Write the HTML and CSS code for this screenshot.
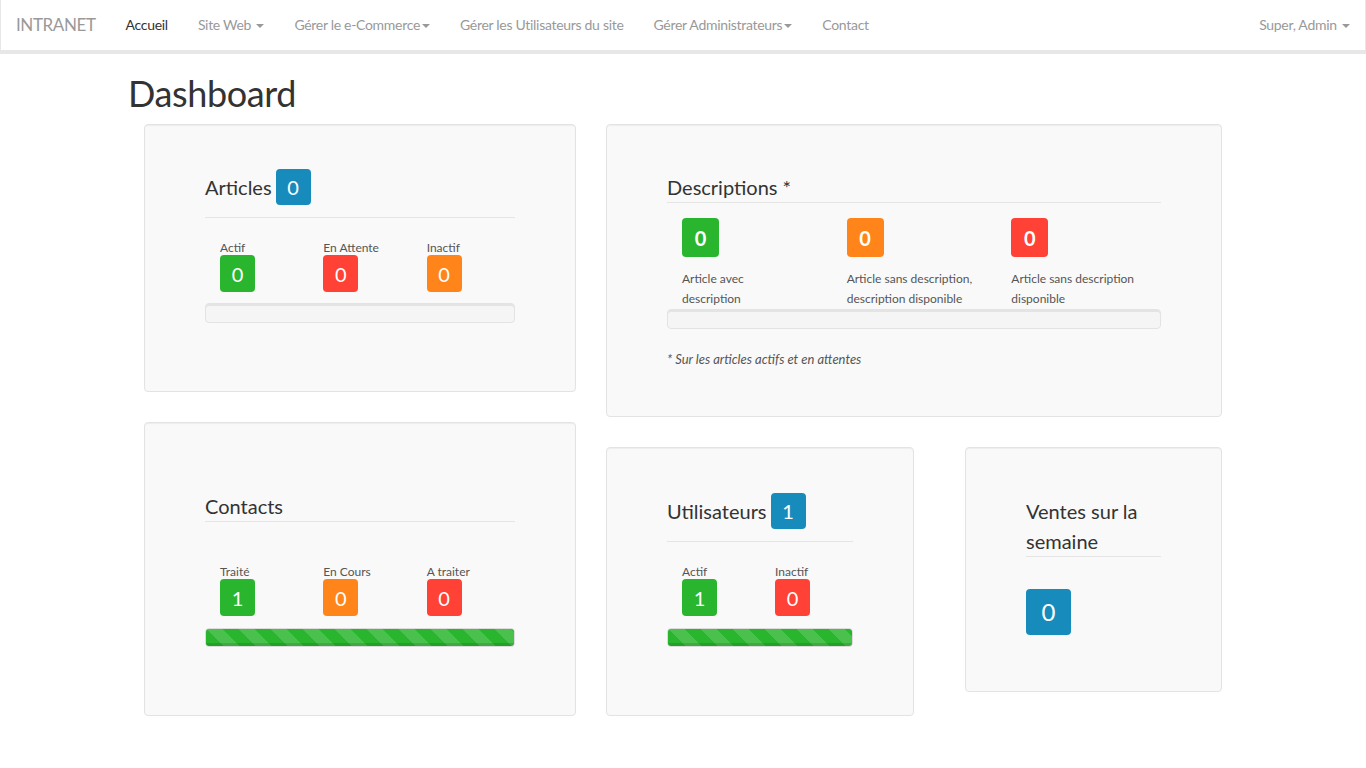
FILE: index.html
```html
<!DOCTYPE html>
<html lang="fr">
<head>
<meta charset="utf-8">
<title>Dashboard - INTRANET</title>
<link rel="stylesheet" href="styles.css">
</head>
<body>
<nav class="navbar">
  <a class="brand" href="#">INTRANET</a>
  <ul class="nav">
    <li class="active"><a href="#">Accueil</a></li>
    <li><a href="#">Site Web <span class="caret"></span></a></li>
    <li><a href="#">Gérer le e-Commerce<span class="caret"></span></a></li>
    <li><a href="#">Gérer les Utilisateurs du site</a></li>
    <li><a href="#">Gérer Administrateurs<span class="caret"></span></a></li>
    <li><a href="#">Contact</a></li>
  </ul>
  <ul class="nav nav-right">
    <li><a href="#">Super, Admin <span class="caret"></span></a></li>
  </ul>
</nav>

<main class="page">
  <h1 class="page-title">Dashboard</h1>
  <div class="dash">
    <div class="col col-left">
      <section class="well well-articles">
        <h3 class="title title-badge">Articles <span class="badge blue">0</span></h3>
        <div class="stats stats-3">
          <div class="stat"><span class="stat-label">Actif</span><span class="box green">0</span></div>
          <div class="stat"><span class="stat-label">En Attente</span><span class="box red">0</span></div>
          <div class="stat"><span class="stat-label">Inactif</span><span class="box orange">0</span></div>
        </div>
        <div class="progress"></div>
      </section>

      <section class="well well-contacts">
        <h3 class="title">Contacts</h3>
        <div class="stats stats-3 stats-low">
          <div class="stat"><span class="stat-label">Traité</span><span class="box green">1</span></div>
          <div class="stat"><span class="stat-label">En Cours</span><span class="box orange">0</span></div>
          <div class="stat"><span class="stat-label">A traiter</span><span class="box red">0</span></div>
        </div>
        <div class="progress progress-fill"><div class="progress-bar" style="width:100%"></div></div>
      </section>
    </div>

    <div class="col col-right">
      <section class="well well-desc">
        <h3 class="title">Descriptions *</h3>
        <div class="stats stats-3 stats-desc">
          <div class="stat"><span class="box box-lg green">0</span><span class="desc-label">Article avec<br>description</span></div>
          <div class="stat"><span class="box box-lg orange">0</span><span class="desc-label">Article sans description,<br>description disponible</span></div>
          <div class="stat"><span class="box box-lg red">0</span><span class="desc-label">Article sans description<br>disponible</span></div>
        </div>
        <div class="progress progress-desc"></div>
        <p class="footnote">* Sur les articles actifs et en attentes</p>
      </section>

      <div class="row-sub">
        <section class="well well-users">
          <h3 class="title title-badge">Utilisateurs <span class="badge blue">1</span></h3>
          <div class="stats stats-2">
            <div class="stat"><span class="stat-label">Actif</span><span class="box green">1</span></div>
            <div class="stat"><span class="stat-label">Inactif</span><span class="box red">0</span></div>
          </div>
          <div class="progress progress-fill"><div class="progress-bar" style="width:100%"></div></div>
        </section>

        <section class="well well-sales">
          <h3 class="title">Ventes sur la semaine</h3>
          <span class="box box-xl blue">0</span>
        </section>
      </div>
    </div>
  </div>
</main>
</body>
</html>
```

FILE: styles.css
```css
html, body {
  margin: 0;
  padding: 0;
}

body {
  font-family: Lato, "Noto Sans", "Liberation Sans", sans-serif;
  font-size: 14px;
  line-height: 20px;
  color: #333;
  background: #fff;
}

a {
  text-decoration: none;
}

/* ---------- Navbar ---------- */
.navbar {
  display: flex;
  align-items: center;
  height: 50px;
  border: 1px solid #e7e7e7;
  border-top: 0;
  border-bottom-width: 4px;
  background: #fff;
}

.brand {
  padding: 0 15px;
  font-size: 17px;
  letter-spacing: -0.4px;
  line-height: 50px;
  color: #999;
}

.nav {
  display: flex;
  list-style: none;
  margin: 0;
  padding: 0;
}

.nav a {
  display: block;
  padding: 15px 15px;
  line-height: 20px;
  color: #999;
  font-size: 14px;
  letter-spacing: -0.3px;
}

.nav .active a {
  color: #333;
}

.nav-right {
  margin-left: auto;
}

.caret {
  display: inline-block;
  width: 0;
  height: 0;
  margin-left: 2px;
  vertical-align: middle;
  border-top: 4px solid #999;
  border-left: 4px solid transparent;
  border-right: 4px solid transparent;
}

/* ---------- Page ---------- */
.page {
  width: 1110px;
  margin: 0 auto;
}

.page-title {
  font-size: 36px;
  font-weight: 400;
  line-height: 40px;
  letter-spacing: -0.4px;
  margin: 19px 0 11px;
  color: #333;
}

.dash {
  display: flex;
  gap: 30px;
  padding-left: 16px;
}

.col {
  display: flex;
  flex-direction: column;
  gap: 30px;
}

.col-left {
  width: 432px;
}

.col-right {
  width: 616px;
}

.row-sub {
  display: flex;
  gap: 51px;
  align-items: flex-start;
}

/* ---------- Wells ---------- */
.well {
  box-sizing: border-box;
  background: #f9f9f9;
  border: 1px solid #e3e3e3;
  border-radius: 4px;
  box-shadow: inset 0 1px 1px rgba(0, 0, 0, 0.05);
  padding: 0 60px;
}

.well-articles { height: 268px; padding-top: 44px; }
.well-contacts { height: 294px; padding-top: 68px; }
.well-desc     { height: 293px; padding-top: 47px; }
.well-users    { width: 308px; height: 269px; padding-top: 45px; }
.well-sales    { width: 257px; height: 245px; padding-top: 48px; }

.title {
  margin: 0;
  font-size: 20px;
  font-weight: 400;
  line-height: 30px;
  color: #333;
  border-bottom: 1px solid #e5e5e5;
}

.title-badge {
  display: flex;
  align-items: center;
  padding-bottom: 12px;
}

.badge {
  display: inline-flex;
  align-items: center;
  justify-content: center;
  width: 35px;
  height: 36px;
  margin-left: 4px;
  border-radius: 4px;
  color: #fff;
  font-size: 20px;
}

/* ---------- Stats ---------- */
.stats {
  display: grid;
  margin-top: 23px;
}

.stats-3 { grid-template-columns: repeat(3, 1fr); }
.stats-2 { grid-template-columns: repeat(2, 1fr); }

.stats-low { margin-top: 43px; }
.stats-desc { margin-top: 15px; }

.stat {
  padding-left: 15px;
}

.stat-label {
  display: block;
  font-size: 12px;
  line-height: 14px;
  color: #555;
}

.box {
  display: flex;
  align-items: center;
  justify-content: center;
  width: 35px;
  height: 37px;
  border-radius: 4px;
  color: #fff;
  font-size: 20px;
}

.box-lg {
  width: 37px;
  height: 39px;
  font-weight: 700;
}

.box-xl {
  width: 45px;
  height: 46px;
  font-size: 24px;
  margin-top: 32px;
}

.desc-label {
  display: block;
  margin-top: 12px;
  font-size: 12px;
  line-height: 20px;
  color: #555;
}

.green  { background: #2ab52e; }
.red    { background: #ff4136; }
.orange { background: #ff851b; }
.blue   { background: #178cbc; }

/* ---------- Progress ---------- */
.progress {
  box-sizing: border-box;
  height: 20px;
  margin-top: 11px;
  background: #f5f5f5;
  border: 1px solid #e3e3e3;
  border-radius: 4px;
  box-shadow: inset 0 2px 0 #e4e4e4;
  overflow: hidden;
}

.progress-fill {
  height: 19px;
  margin-top: 12px;
  border-color: #dcdcdc;
}

.progress-desc {
  margin-top: 0;
}

.progress-bar {
  height: 100%;
  background-color: #2ab52e;
  background-image: linear-gradient(45deg,
    rgba(255, 255, 255, 0.15) 25%, transparent 25%,
    transparent 50%, rgba(255, 255, 255, 0.15) 50%,
    rgba(255, 255, 255, 0.15) 75%, transparent 75%, transparent);
  background-size: 32px 32px;
  box-shadow: inset 0 -3px 0 rgba(0, 0, 0, 0.12);
}

.footnote {
  margin: 20px 0 0;
  font-size: 13px;
  line-height: 20px;
  font-style: italic;
  color: #555;
}
```
